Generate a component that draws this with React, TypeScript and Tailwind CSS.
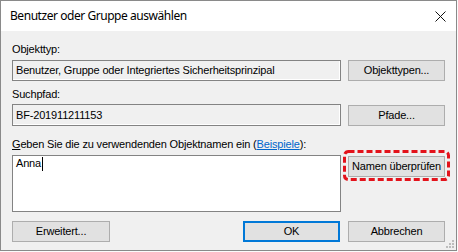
import React from 'react'

const body = { fontFamily: '"Liberation Sans", Arial, sans-serif' }

const Btn = ({ label, className = '' }: { label: string; className?: string }) => (
  <button
    className={`h-[21px] w-[97px] bg-[#e1e1e1] border border-[#adadad] text-[11px] leading-none tracking-[-0.17px] text-black ${className}`}
    style={body}
  >
    {label}
  </button>
)

const App = () => {
  return (
    <div className="w-[458px] h-[252px] bg-[#fbfbfb] overflow-hidden">
      <div className="w-[457px] h-[251px] border border-[#8a8a8a] flex flex-col relative">
        {/* title bar */}
        <div className="h-[30px] bg-white flex items-center justify-between pl-[9px] pr-[9px] shrink-0">
          <span className="text-[12px] tracking-[-0.45px] text-black" style={{ fontFamily: '"Noto Sans", "Open Sans", sans-serif' }}>
            Benutzer oder Gruppe auswählen
          </span>
          <svg width="11" height="11" viewBox="0 0 11 11" className="mr-[1px]">
            <path d="M0.5 0.5 L10.5 10.5 M10.5 0.5 L0.5 10.5" stroke="#111" strokeWidth="1" />
          </svg>
        </div>

        {/* content */}
        <div className="flex-1 bg-[#f0f0f0] pl-[11px] pr-[11px] pt-[12px] flex flex-col text-[11px] leading-[13px] tracking-[-0.17px] text-black" style={body}>
          <div>Objekttyp:</div>
          <div className="flex items-start justify-between mt-[4px]">
            <div className="h-[21px] w-[329px] border border-[#838383] shadow-[inset_-1px_-1px_0_#fff] bg-[#f0f0f0] flex items-center pl-[3px]">
              Benutzer, Gruppe oder Integriertes Sicherheitsprinzipal
            </div>
            <Btn label="Objekttypen..." />
          </div>

          <div className="mt-[7px]">Suchpfad:</div>
          <div className="flex items-start justify-between mt-[3px]">
            <div className="h-[22px] w-[329px] border border-[#838383] shadow-[inset_-1px_-1px_0_#fff] bg-[#f0f0f0] flex items-center pl-[3px]">
              BF-201911211153
            </div>
            <Btn label="Pfade..." className="mt-[1px]" />
          </div>

          <div className="mt-[12px]">
            <span className="underline">G</span>eben Sie die zu verwendenden Objektnamen ein (
            <span className="text-[#0066cc] underline">Beispiele</span>):
          </div>
          <div className="flex items-start justify-between mt-[4px]">
            <div className="h-[57px] w-[329px] border border-[#838383] shadow-[inset_-1px_-1px_0_#fff] bg-white pl-[3px] pt-[1px] flex items-start">
              <span>Anna</span>
              <span className="w-px h-[14px] bg-black ml-[1px]" />
            </div>
            <div className="relative mt-[1px]">
              <Btn label="Namen überprüfen" />
              <svg className="absolute left-[-5px] top-[-6px]" width="107" height="31" viewBox="0 0 107 31">
                <rect x="1.5" y="1.5" width="104" height="28" rx="4" fill="none" stroke="#e3121b" strokeWidth="3" strokeDasharray="6 3" />
              </svg>
            </div>
          </div>

          <div className="flex items-start mt-[9px]">
            <Btn label="Erweitert..." className="w-[98px]" />
            <div className="flex-1" />
            <button
              className="h-[21px] w-[97px] bg-[#e1e1e1] border-2 border-[#0078d7] text-[11px] leading-none text-black mr-[8px]"
              style={body}
            >
              OK
            </button>
            <Btn label="Abbrechen" />
          </div>
        </div>

        {/* resize grip */}
        <svg className="absolute right-[2px] bottom-[2px]" width="8" height="8" viewBox="0 0 8 8">
          <rect x="6" y="0" width="2" height="2" fill="#bdbdbd" />
          <rect x="3" y="3" width="2" height="2" fill="#bdbdbd" />
          <rect x="6" y="3" width="2" height="2" fill="#bdbdbd" />
          <rect x="0" y="6" width="2" height="2" fill="#bdbdbd" />
          <rect x="3" y="6" width="2" height="2" fill="#bdbdbd" />
          <rect x="6" y="6" width="2" height="2" fill="#bdbdbd" />
        </svg>
      </div>
    </div>
  )
}

export default App
